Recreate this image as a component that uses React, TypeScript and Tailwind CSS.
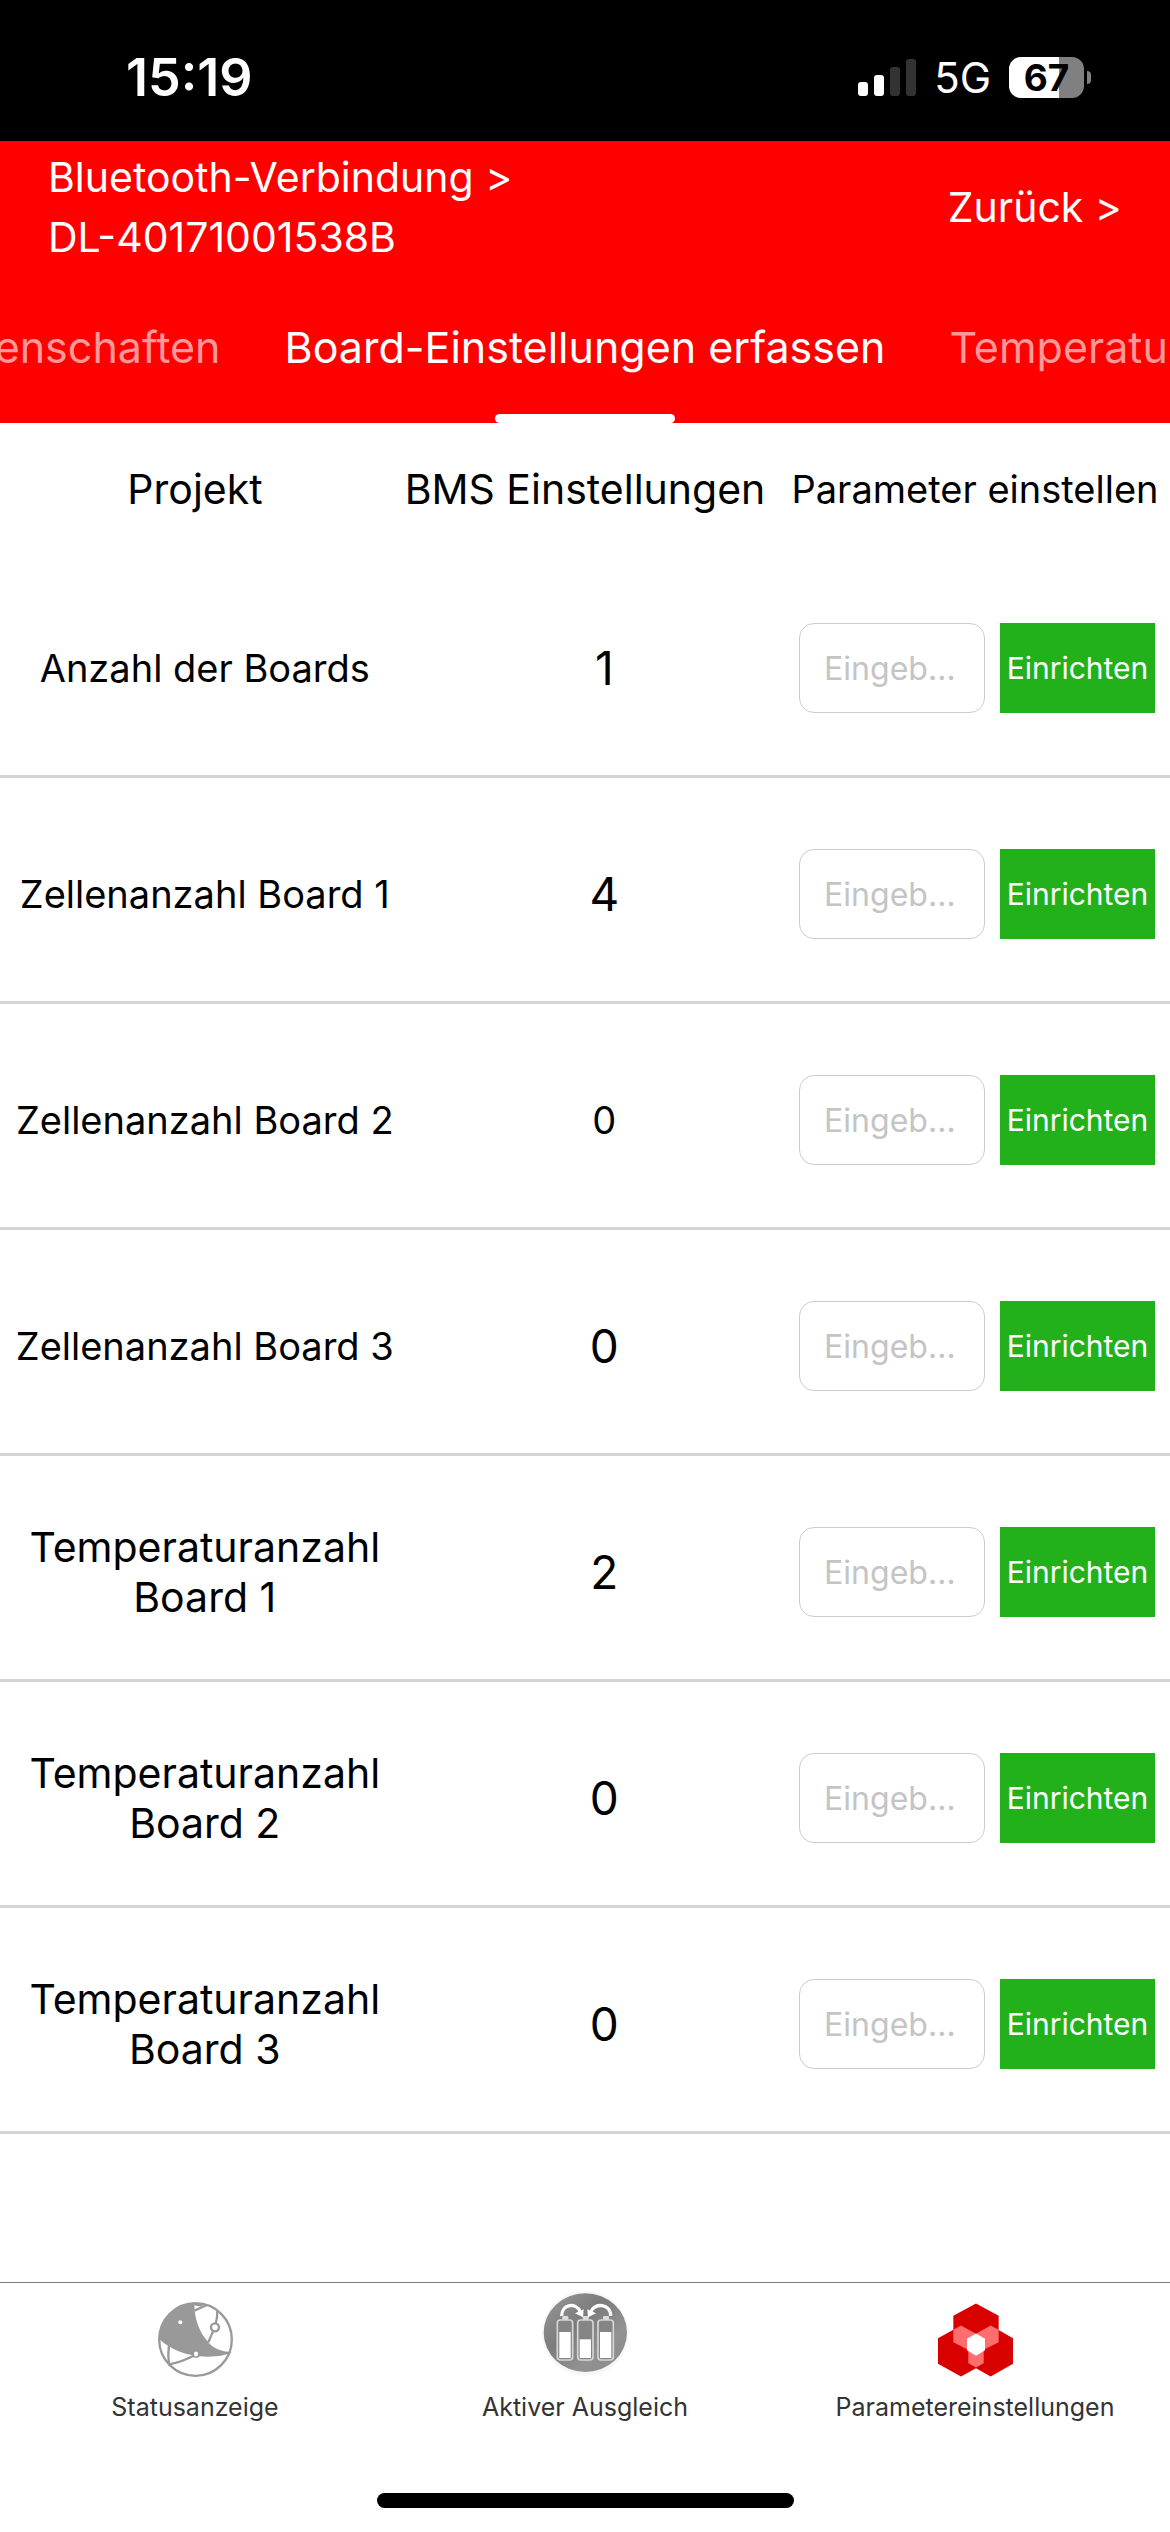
import { useState } from "react";
import { clsx } from "clsx";

const ROWS = [
  { label: "Anzahl der Boards", value: "1" },
  { label: "Zellenanzahl Board 1", value: "4" },
  { label: "Zellenanzahl Board 2", value: "0", small: true },
  { label: "Zellenanzahl Board 3", value: "0" },
  { label: "Temperaturanzahl Board 1", value: "2", wrap: true },
  { label: "Temperaturanzahl Board 2", value: "0", wrap: true },
  { label: "Temperaturanzahl Board 3", value: "0", wrap: true },
];

function SignalIcon() {
  return (
    <svg viewBox="0 0 58 37" className="h-[37px] w-[58px]" aria-hidden="true">
      <rect x="0" y="23" width="10" height="14" rx="3" fill="#fff" />
      <rect x="16" y="16" width="10" height="21" rx="3" fill="#fff" />
      <rect x="32" y="8" width="10" height="29" rx="3" fill="#333" />
      <rect x="48" y="0" width="10" height="37" rx="3" fill="#333" />
    </svg>
  );
}

function Battery() {
  return (
    <div className="flex items-center gap-[3px]">
      <div className="flex h-[41px] w-[75px] items-center justify-center rounded-[12px] bg-linear-to-r from-white from-67% to-[#808080] to-67% text-[37px] leading-none font-bold text-black">
        67
      </div>
      <div className="h-[13px] w-1 rounded-r-full bg-[#808080]" />
    </div>
  );
}

function StatusBar() {
  return (
    <div className="flex h-[141px] items-center justify-between bg-black pr-[79px] pl-[126px] text-white">
      <span className="pt-[15px] text-[52px] leading-none font-semibold">15:19</span>
      <div className="flex items-center gap-[18px] pt-[14px]">
        <SignalIcon />
        <span className="text-[42px] leading-none">5G</span>
        <Battery />
      </div>
    </div>
  );
}

function Header() {
  return (
    <header className="bg-[#ff0000] text-white">
      <div className="flex items-center justify-between px-12 pt-[6px] text-[41px] leading-[60px]">
        <a href="#bluetooth">
          Bluetooth-Verbindung &gt;
          <br />
          DL-40171001538B
        </a>
        <a href="#back">Zurück &gt;</a>
      </div>
      <nav className="grid grid-cols-[1fr_auto_1fr] pt-[18px] text-[43px] whitespace-nowrap">
        <div className="flex min-w-0 justify-end overflow-hidden">
          <button className="h-[138px] px-8 pb-[13px] text-[#ff9999]">Eigenschaften</button>
        </div>
        <button className="flex h-[138px] flex-col items-center justify-between px-8">
          <span className="pt-[30px]">Board-Einstellungen erfassen</span>
          <span className="h-[9px] w-[180px] rounded-full bg-white" />
        </button>
        <div className="flex min-w-0 overflow-hidden">
          <button className="h-[138px] px-8 pb-[13px] text-[#ff9999]">Temperatureinstellungen</button>
        </div>
      </nav>
    </header>
  );
}

function SettingsTable() {
  const [values, setValues] = useState<Record<string, string>>({});

  return (
    <table className="block w-full text-center text-black">
      <thead className="block">
        <tr className="grid h-[129px] grid-cols-3 items-center pt-1 text-[41px] whitespace-nowrap">
          <th className="font-normal">Projekt</th>
          <th className="font-normal">BMS Einstellungen</th>
          <th className="text-[38px] font-normal">Parameter einstellen</th>
        </tr>
      </thead>
      <tbody className="block">
        {ROWS.map((row) => (
          <tr
            key={row.label}
            className="grid h-[226px] grid-cols-[35%_33.3%_minmax(0,1fr)] items-center border-b-[3px] border-[#d4d4d4] pt-[9px]"
          >
            <td className={clsx(row.wrap ? "text-[41px] leading-[50px]" : "text-[38px] whitespace-nowrap")}>{row.label}</td>
            <td className={row.small ? "text-[38px]" : "text-[46px]"}>{row.value}</td>
            <td className="flex gap-[15px] pr-[15px]">
              <input
                type="text"
                aria-label={row.label}
                placeholder="Eingeb…"
                value={values[row.label] ?? ""}
                onChange={(e) => setValues({ ...values, [row.label]: e.target.value })}
                className="h-[90px] min-w-0 flex-1 rounded-[15px] border border-[#cccccc] px-6 text-[32px] placeholder:text-[#c4c4c4]"
              />
              <button className="h-[90px] w-[155px] shrink-0 bg-[#22b11b] text-[30px] text-white">Einrichten</button>
            </td>
          </tr>
        ))}
      </tbody>
    </table>
  );
}

function GlobeIcon() {
  return (
    <svg viewBox="81 66 225 225" className="size-[75px]" fill="none" stroke="#999" strokeWidth="7" aria-hidden="true">
      <path fill="#999" stroke="none" d="M190 68C130 70 84 120 85 178C120 209 165 230 230 230C260 229 290 226 302 216C250 215 232 187 232 187C205 155 190 120 190 68Z" />
      <circle cx="193.500" cy="178.500" r="109" />
      <path d="M190 92L228 75M190 73L214 77" />
      <path d="M259 92Q259 115 254 130M246 154L232 187" />
      <circle cx="252" cy="142" r="12" />
      <path d="M114 193Q110 225 114 253Q155 246 190 226" />
      <rect x="187" y="213" width="16" height="18" rx="5" fill="#fff" strokeWidth="5" />
      <circle cx="148" cy="127" r="6" fill="#fff" stroke="none" />
    </svg>
  );
}

function Cell({ x, fill }: { x: number; fill: number }) {
  return (
    <g>
      <rect x={x + 15} y="138" width="18" height="12" rx="4" fill="#ddd" />
      <rect x={x} y="150" width="46" height="120" rx="9" fill="#858585" stroke="#d6d6d6" strokeWidth="5" />
      <rect x={x + 8} y="158" width="30" height="104" fill="#858585" />
      <rect x={x + 6} y={fill} width="34" height={264 - fill} fill="#fff" />
    </g>
  );
}

function BalanceIcon() {
  return (
    <svg viewBox="60 60 264 261" className="h-[87px] w-[88px]" aria-hidden="true">
      <defs>
        <linearGradient id="disc" x1="0" y1="0" x2="1" y2="1">
          <stop offset="0" stopColor="#999" />
          <stop offset="0.400" stopColor="#7c7c7c" />
          <stop offset="0.700" stopColor="#929292" />
          <stop offset="1" stopColor="#888" />
        </linearGradient>
      </defs>
      <ellipse cx="193" cy="190" rx="131" ry="128" fill="#f7f7f7" />
      <ellipse cx="193" cy="188" rx="125" ry="118" fill="url(#disc)" />
      <Cell x={109} fill={186} />
      <Cell x={170} fill={208} />
      <Cell x={231} fill={186} />
      <g fill="none" stroke="#fff" strokeWidth="10">
        <path d="M122 138C122 100 166 98 177 124" />
        <path d="M269 138C269 100 221 98 210 124" />
      </g>
      <path fill="#fff" d="M162 130L188 118L186 142ZM225 130L199 118L201 142Z" />
    </svg>
  );
}

function HexIcon() {
  return (
    <svg viewBox="81 70 225 221" className="h-[74px] w-[75px]" aria-hidden="true">
      <g fill="#d90000">
        <path d="M195 71L263 108V187L195 225L127 187V108Z" />
        <path d="M150 137L195 162V265L150 290L81 252V175Z" />
        <path d="M239 137L306 175V252L239 290L195 265V162Z" />
      </g>
      <g fill="#ff6e6e">
        <path d="M127 150L150 137L195 162L168 178V208L127 187Z" />
        <path d="M263 150L239 137L195 162L221 178V208L263 187Z" />
        <path d="M172 208L195 222L218 208V250L195 263L172 250Z" />
      </g>
      <path fill="#fff" d="M195 161L222 177V211L195 228L168 211V177Z" />
    </svg>
  );
}

const TABS = [
  { href: "#status", label: "Statusanzeige", icon: GlobeIcon },
  { href: "#balance", label: "Aktiver Ausgleich", icon: BalanceIcon },
  { href: "#params", label: "Parametereinstellungen", icon: HexIcon },
];

function BottomNav() {
  return (
    <nav className="mt-auto border-t border-[#808080]">
      <div className="grid grid-cols-3">
        {TABS.map((tab) => {
          const Icon = tab.icon;
          return (
            <a key={tab.href} href={tab.href} className="flex flex-col items-center text-[25px] leading-[36px] text-[#333333]">
              <span className="flex h-[94px] items-end">
                <Icon />
              </span>
              <span className="pt-3">{tab.label}</span>
            </a>
          );
        })}
      </div>
      <div className="flex justify-center pt-[68px] pb-6">
        <div className="h-[15px] w-[417px] rounded-full bg-black" />
      </div>
    </nav>
  );
}

export default function App() {
  return (
    <div className="flex min-h-screen flex-col bg-white font-[Inter,sans-serif]">
      <StatusBar />
      <Header />
      <SettingsTable />
      <BottomNav />
    </div>
  );
}
